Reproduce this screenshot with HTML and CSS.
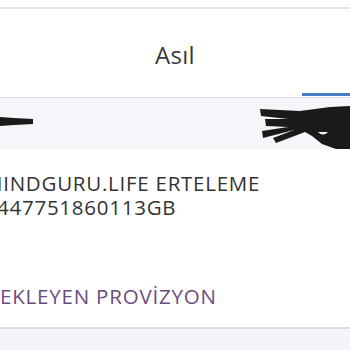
FILE: index.html
```html
<!DOCTYPE html>
<html lang="tr">
<head>
<meta charset="utf-8">
<link rel="stylesheet" href="styles.css">
</head>
<body>
<div class="page">
  <div class="topgap"></div>
  <div class="tabs">
    <div class="tab-title">Asıl</div>
    <div class="indicator-row"><div class="indicator"></div></div>
  </div>
  <div class="band">
    <svg class="scribble" width="350" height="51" viewBox="0 98 350 51">
      <path d="M0,117 L14,118 L33,119 L33,124 L14,125 L0,126 Z" fill="#1a1a1a"/>
      <path d="M260,109 L300,111 L330,107 L350,106 L350,150 L336,149 L322,144 L312,136 L305,132 L276,143 L273,138 L294,130 L263,138 L262,131 L288,127 L266,126 L265,119 L288,119 L261,116 Z" fill="#1a1a1a"/>
      <path d="M318,132 Q323,137 328,132 Z" fill="#f5f6fa"/>
    </svg>
  </div>
  <div class="content">
    <div class="line line-a">MINDGURU.LIFE ERTELEME</div>
    <div class="line line-b">447751860113GB</div>
    <div class="purple">EKLEYEN PROVİZYON</div>
  </div>
  <div class="bottom"></div>
</div>
</body>
</html>
```
FILE: styles.css
```css
html, body {
  margin: 0;
  padding: 0;
  background: #ffffff;
}
body {
  width: 350px;
  height: 350px;
  overflow: hidden;
  font-family: "Open Sans", "Liberation Sans", sans-serif;
}
.page {
  display: flex;
  flex-direction: column;
  height: 350px;
}
.topgap {
  height: 7px;
  border-bottom: 2px solid #e7e7eb;
}
.tabs {
  height: 88px;
  display: flex;
  flex-direction: column;
  border-bottom: 1px solid #dcdde2;
}
.tab-title {
  flex: 1;
  display: flex;
  align-items: center;
  justify-content: center;
  padding-top: 7px;
  font-size: 24px;
  color: #3a3a3a;
  letter-spacing: 0.3px;
}
.indicator-row {
  display: flex;
  justify-content: flex-end;
  height: 3px;
  margin-bottom: 1px;
}
.indicator {
  width: 48px;
  height: 3px;
  background: #4a7cc2;
}
.band {
  height: 51px;
  background: #f5f6fa;
}
.scribble {
  display: block;
}
.content {
  flex: 0 0 178px;
  padding-top: 22px;
  box-sizing: border-box;
  overflow: hidden;
}
.line {
  font-size: 20.5px;
  line-height: 24px;
  letter-spacing: 0.75px;
  color: #333333;
  white-space: nowrap;
}
.line-a {
  margin-left: -16px;
}
.line-b {
  margin-left: -3px;
}
.purple {
  margin-top: 65px;
  font-size: 20.5px;
  line-height: 24px;
  letter-spacing: 0.8px;
  color: #6a4d7d;
  white-space: nowrap;
}
.bottom {
  flex: 1;
  border-top: 2px solid #dcdce1;
  background: #f4f5f9;
}
```
